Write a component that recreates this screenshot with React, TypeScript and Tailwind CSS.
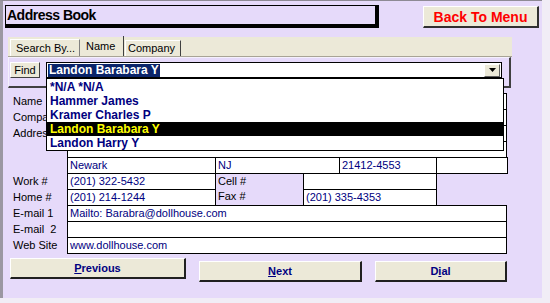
import React from "react";

const font = { fontFamily: '"Liberation Sans", Arial, sans-serif' };

const people = ["*N/A *N/A", "Hammer James", "Kramer Charles P", "Landon Barabara Y", "Landon Harry Y"];

function Cell({ w, children, first }: { w: number; children?: React.ReactNode; first?: boolean }) {
  return (
    <div
      className={`h-[17px] shrink-0 border border-black bg-white pl-[2px] text-[11px] leading-[15px] text-[#000080] ${first ? "" : "-ml-px"}`}
      style={{ width: w }}
    >
      {children}
    </div>
  );
}

function Row({ label, children }: { label?: string; children: React.ReactNode }) {
  return (
    <div className="-mt-px flex h-[17px] first:mt-0">
      <div className="w-[64px] shrink-0 whitespace-pre pl-[10px] text-[11px] leading-[17px] text-black">{label}</div>
      {children}
    </div>
  );
}

function WinButton({ w, children }: { w: number; children: React.ReactNode }) {
  return (
    <button
      className="h-[21px] shrink-0 border-t border-l border-t-white border-l-white border-r-2 border-b-2 border-r-[#202020] border-b-[#202020] bg-[#ece9d8] text-[11px] font-bold text-[#000080]"
      style={{ width: w }}
    >
      {children}
    </button>
  );
}

export default function App() {
  return (
    <div className="h-[303px] w-[550px] bg-[#f1edf6]" style={font}>
      <div className="flex h-[298px] w-[542px] flex-col border-t border-l-[3px] border-t-[#8e8a94] border-l-[#9b97a2] bg-[#e6dafa]">
        {/* header */}
        <div className="mt-[4px] flex items-start">
          <div className="ml-[2px] h-[23px] w-[374px] border border-r-4 border-b-4 border-black pl-[1px] text-[14px] font-bold leading-[18px] tracking-[-0.5px] text-black">
            Address Book
          </div>
          <button className="ml-[44px] mt-[1px] h-[22px] w-[116px] border-t border-l border-t-white border-l-white border-r-2 border-b-2 border-r-[#303030] border-b-[#303030] bg-[#ece9d8] text-[14px] font-bold text-[#ff0000]">
            Back To Menu
          </button>
        </div>

        {/* tabs */}
        <div className="ml-[5px] mt-[9px] flex h-[20px] w-[504px] items-end border-b border-b-[#a8a496] bg-[#ece9d8] pl-[2px]">
          <div className="flex h-[17px] w-[70px] items-center border-t border-l border-r border-t-white border-l-white border-r-[#808080] pl-[5px] text-[11px] text-black">
            Search By...
          </div>
          <div className="flex h-[20px] w-[44px] items-start border-r border-r-[#404040] pl-[6px] pt-[2px] text-[11px] text-black">
            Name
          </div>
          <div className="ml-px flex h-[16px] w-[56px] items-center border-l border-r border-t border-l-white border-t-white border-r-[#404040] pl-[2px] text-[11px] text-black">
            Company
          </div>
        </div>

        {/* find panel */}
        <div className="ml-[5px] flex h-[31px] w-[503px] items-start border-t border-l border-t-[#f4f0fc] border-l-[#f4f0fc] border-r-2 border-b-2 border-r-[#404040] border-b-[#404040] pl-[1px] pt-[4px]">
          <button className="h-[16px] w-[30px] border-t border-l border-t-white border-l-white border-r border-b border-r-[#404040] border-b-[#404040] bg-[#ece9d8] text-[11px] leading-[13px] text-black">
            Find
          </button>
          <div className="relative ml-[6px] flex h-[16px] w-[456px] items-center border border-black bg-white pl-px">
            <span className="bg-[#0a246a] px-[1px] text-[12px] font-bold leading-[13px] text-white">Landon Barabara Y</span>
            <div className="ml-auto mr-[1px] flex h-[13px] w-[16px] items-center justify-center border-t border-l border-t-white border-l-white border-r border-b border-r-[#606060] border-b-[#606060] bg-[#ece9d8]">
              <svg width="7" height="4" viewBox="0 0 7 4">
                <path d="M0 0h7L3.5 4z" fill="#000" />
              </svg>
            </div>
            <div className="absolute left-[-1px] top-[15px] z-10 w-[458px] border border-black bg-white pt-px">
              {people.map((p) => (
                <div
                  key={p}
                  className={`h-[14px] pl-[3px] text-[12px] font-bold leading-[14px] ${
                    p === "Landon Barabara Y" ? "bg-black text-[#ffff00]" : "text-[#000080]"
                  }`}
                >
                  {p}
                </div>
              ))}
            </div>
          </div>
        </div>

        {/* form */}
        <div className="mt-[5px] flex flex-col">
          <Row label="Name">
            <Cell w={440} first />
          </Row>
          <Row label="Company">
            <Cell w={440} first />
          </Row>
          <Row label="Address">
            <Cell w={440} first />
          </Row>
          <Row>
            <Cell w={440} first />
          </Row>
          <Row>
            <Cell w={149} first>Newark</Cell>
            <Cell w={125}>NJ</Cell>
            <Cell w={98}>21412-4553</Cell>
            <Cell w={72} />
          </Row>
          <Row label="Work #">
            <Cell w={149} first>(201) 322-5432</Cell>
            <div className="w-[87px] shrink-0 pl-[2px] text-[11px] leading-[17px] text-black">Cell #</div>
            <Cell w={134} first />
          </Row>
          <Row label="Home #">
            <Cell w={149} first>(201) 214-1244</Cell>
            <div className="w-[87px] shrink-0 pl-[2px] text-[11px] leading-[15px] text-black">Fax #</div>
            <Cell w={134} first>(201) 335-4353</Cell>
          </Row>
          <Row label="E-mail 1">
            <Cell w={440} first>Mailto: Barabra@dollhouse.com</Cell>
          </Row>
          <Row label="E-mail  2">
            <Cell w={440} first />
          </Row>
          <Row label="Web Site">
            <Cell w={440} first>www.dollhouse.com</Cell>
          </Row>
        </div>

        {/* buttons */}
        <div className="ml-[7px] mt-[4px] flex">
          <WinButton w={176}>
            <span className="underline">P</span>revious
          </WinButton>
          <div className="ml-[13px]">
            <WinButton w={163}>
              <span className="underline">N</span>ext
            </WinButton>
          </div>
          <div className="ml-[13px]">
            <WinButton w={132}>
              D<span className="underline">i</span>al
            </WinButton>
          </div>
        </div>
      </div>
    </div>
  );
}
